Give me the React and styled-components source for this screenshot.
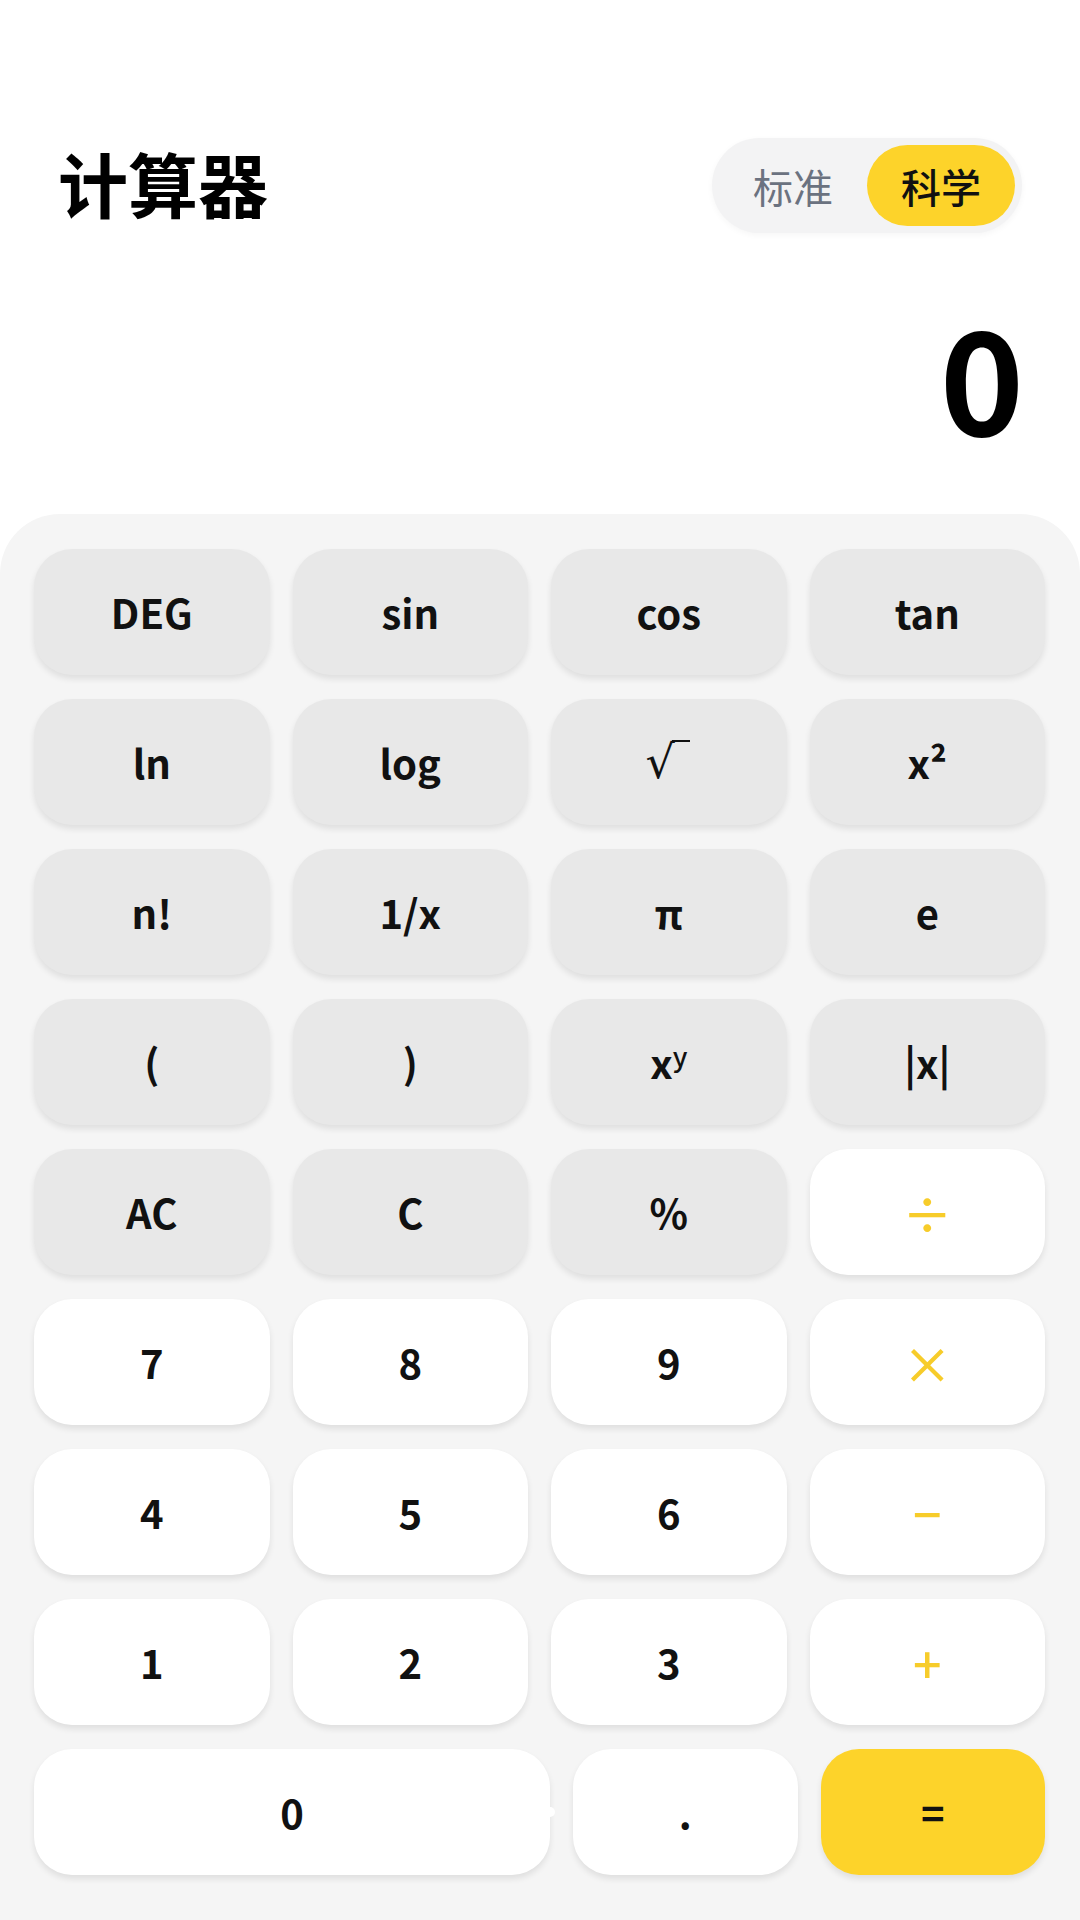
import React, { useState } from "react";
import styled, { createGlobalStyle } from "styled-components";

const GlobalStyle = createGlobalStyle`
  html, body {
    margin: 0;
    padding: 0;
    background: #fff;
  }
  body {
    font-family: "Noto Sans CJK SC", "Noto Sans", sans-serif;
    color: #111;
  }
`;

const Page = styled.div`
  width: 1080px;
  min-height: 1920px;
  display: flex;
  flex-direction: column;
  background: #fff;
`;

const Header = styled.div`
  display: flex;
  justify-content: space-between;
  align-items: center;
  padding: 138px 58px 0 58px;
`;

const Title = styled.h1`
  margin: 0 0 5px;
  font-size: 70px;
  font-weight: 700;
  line-height: 1;
  color: #000;
`;

const Toggle = styled.div`
  display: flex;
  padding: 7px;
  background: #f3f3f4;
  border-radius: 48px;
  box-shadow: 0 2px 6px rgba(0, 0, 0, 0.04);
`;

const Segment = styled.div`
  width: 148px;
  height: 81px;
  border-radius: 41px;
  display: flex;
  align-items: center;
  justify-content: center;
  font-size: 40px;
  font-weight: ${(p) => (p.$active ? 500 : 400)};
  color: ${(p) => (p.$active ? "#111" : "#6b7280")};
  background: ${(p) => (p.$active ? "#fdd32a" : "transparent")};
  cursor: pointer;
`;

const Display = styled.div`
  height: 281px;
  display: flex;
  align-items: center;
  justify-content: flex-end;
  padding: 0 56px 0 60px;
  font-size: 143px;
  font-weight: 700;
  line-height: 1;
  color: #000;
`;

const Pad = styled.div`
  flex: 1;
  background: #f5f5f5;
  border-radius: 60px 60px 0 0;
  padding: 35px 35px 47px 34px;
  display: flex;
  flex-direction: column;
  gap: 24px;
`;

const Grid = styled.div`
  display: grid;
  grid-template-columns: repeat(4, 1fr);
  grid-auto-rows: 126px;
  column-gap: 23px;
  row-gap: 24px;
`;

const BottomRow = styled.div`
  display: grid;
  grid-template-columns: 516px 1fr 1fr;
  grid-auto-rows: 126px;
  column-gap: 23px;
`;

const colors = {
  fn: { bg: "#e8e8e8", fg: "#111" },
  num: { bg: "#ffffff", fg: "#111" },
  op: { bg: "#ffffff", fg: "#f7cc2a" },
  eq: { bg: "#fdd32a", fg: "#111" },
};

const Key = styled.button`
  position: relative;
  border: none;
  outline: none;
  border-radius: 38px;
  background: ${(p) => colors[p.$kind].bg};
  color: ${(p) => colors[p.$kind].fg};
  font-family: "Noto Sans CJK SC", "Noto Sans", sans-serif;
  font-size: ${(p) => (p.$kind === "op" ? "50px" : "40px")};
  font-weight: ${(p) => (p.$kind === "op" ? 500 : 700)};
  line-height: 1;
  display: flex;
  align-items: center;
  justify-content: center;
  box-shadow: 0 4px 6px rgba(0, 0, 0, 0.09);
  cursor: pointer;
  padding: 0;

  sup {
    font-size: 27px;
    font-weight: 500;
    line-height: 0;
    position: relative;
    top: -12px;
    vertical-align: baseline;
  }
`;

/* the little white bump on the right of the wide zero key */
const ZeroKey = styled(Key)`
  &::after {
    content: "";
    position: absolute;
    right: -5px;
    top: 58px;
    width: 10px;
    height: 10px;
    border-radius: 5px;
    background: #fff;
  }
`;

const Radical = styled.span`
  display: inline-flex;
  align-items: flex-start;
  font-family: "DejaVu Sans", "Liberation Sans", sans-serif;
  font-weight: 400;
  font-size: 46px;
  line-height: 1;
  margin-left: -2px;
`;

const Bar = styled.span`
  display: inline-block;
  width: 18px;
  margin-left: -3px;
  margin-top: 1px;
  border-top: 2.5px solid #111;
`;

const rows = [
  [["DEG", "fn"], ["sin", "fn"], ["cos", "fn"], ["tan", "fn"]],
  [["ln", "fn"], ["log", "fn"], ["sqrt", "fn"], ["x²", "fn"]],
  [["n!", "fn"], ["1/x", "fn"], ["π", "fn"], ["e", "fn"]],
  [["(", "fn"], [")", "fn"], ["xy", "fn"], ["|x|", "fn"]],
  [["AC", "fn"], ["C", "fn"], ["%", "fn"], ["÷", "op"]],
  [["7", "num"], ["8", "num"], ["9", "num"], ["×", "op"]],
  [["4", "num"], ["5", "num"], ["6", "num"], ["−", "op"]],
  [["1", "num"], ["2", "num"], ["3", "num"], ["+", "op"]],
];

const renderLabel = (label) => {
  if (label === "sqrt")
    return (
      <Radical>
        √<Bar />
      </Radical>
    );
  if (label === "xy")
    return (
      <span>
        x<sup>y</sup>
      </span>
    );
  return label;
};

export default function App() {
  const [mode, setMode] = useState("sci");

  return (
    <>
      <GlobalStyle />
      <Page>
        <Header>
          <Title>计算器</Title>
          <Toggle>
            <Segment $active={mode === "std"} onClick={() => setMode("std")}>
              标准
            </Segment>
            <Segment $active={mode === "sci"} onClick={() => setMode("sci")}>
              科学
            </Segment>
          </Toggle>
        </Header>
        <Display>0</Display>
        <Pad>
          <Grid>
            {rows.flat().map(([label, kind], i) => (
              <Key key={i} $kind={kind}>
                {renderLabel(label)}
              </Key>
            ))}
          </Grid>
          <BottomRow>
            <ZeroKey $kind="num">0</ZeroKey>
            <Key $kind="num">.</Key>
            <Key $kind="eq">=</Key>
          </BottomRow>
        </Pad>
      </Page>
    </>
  );
}
